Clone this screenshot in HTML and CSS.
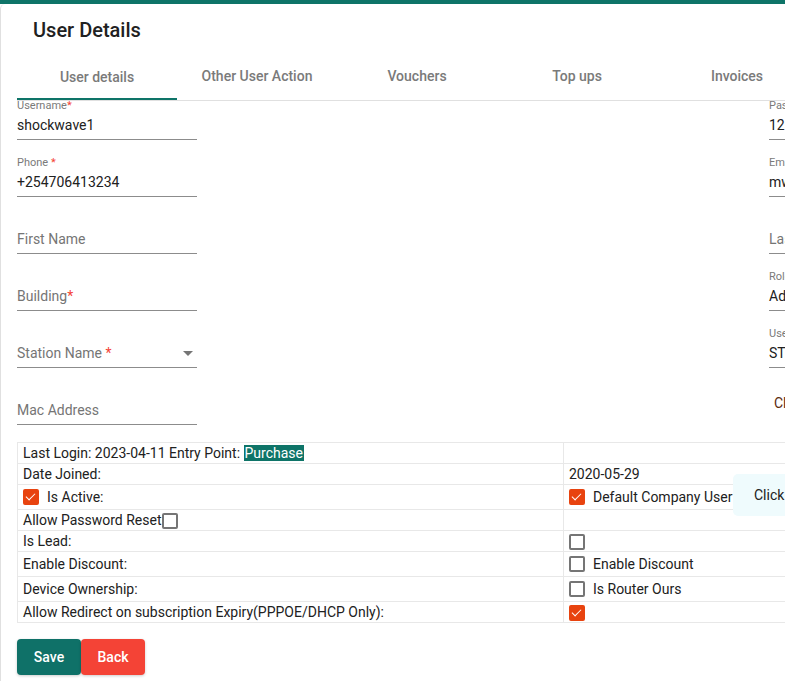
FILE: index.html
```html
<!DOCTYPE html>
<html>
<head>
<meta charset="utf-8">
<link rel="stylesheet" href="styles.css">
</head>
<body>
<div class="topbar"></div>
<div class="card">
  <h1 class="title">User Details</h1>
  <div class="tabs">
    <div class="tab active">User details</div>
    <div class="tab">Other User Action</div>
    <div class="tab">Vouchers</div>
    <div class="tab">Top ups</div>
    <div class="tab">Invoices</div>
  </div>
  <div class="form">
    <div class="col">
      <div class="field"><div class="label">Username<span class="req">*</span></div><div class="value">shockwave1</div></div>
      <div class="field"><div class="label">Phone <span class="req">*</span></div><div class="value">+254706413234</div></div>
      <div class="field"><div class="label"></div><div class="value ph">First Name</div></div>
      <div class="field"><div class="label"></div><div class="value ph">Building<span class="req">*</span></div></div>
      <div class="field"><div class="label"></div><div class="value ph select">Station Name <span class="req">*</span><span class="caret"></span></div></div>
      <div class="field"><div class="label"></div><div class="value ph">Mac Address</div></div>
    </div>
    <div class="col">
      <div class="field"><div class="label">Password</div><div class="value">12345678</div></div>
      <div class="field"><div class="label">Email</div><div class="value">mwangi@example.com</div></div>
      <div class="field"><div class="label"></div><div class="value ph">Last Name</div></div>
      <div class="field"><div class="label">Role</div><div class="value">Admin</div></div>
      <div class="field"><div class="label">User Type</div><div class="value">STANDARD</div></div>
      <div class="linkrow">Click to change password</div>
    </div>
  </div>
  <div class="tablewrap">
    <table class="info">
      <tr><td>Last Login: 2023-04-11 Entry Point: <span class="hl">Purchase</span></td><td></td></tr>
      <tr><td>Date Joined:</td><td>2020-05-29</td></tr>
      <tr><td><label class="cb"><span class="box on"></span>Is Active:</label></td><td><label class="cb"><span class="box on"></span>Default Company User</label></td></tr>
      <tr><td>Allow Password Reset<span class="box"></span></td><td></td></tr>
      <tr><td>Is Lead:</td><td><span class="box"></span></td></tr>
      <tr><td>Enable Discount:</td><td><label class="cb"><span class="box"></span>Enable Discount</label></td></tr>
      <tr><td>Device Ownership:</td><td><label class="cb"><span class="box"></span>Is Router Ours</label></td></tr>
      <tr><td>Allow Redirect on subscription Expiry(PPPOE/DHCP Only):</td><td><span class="box on"></span></td></tr>
    </table>
    <div class="hint">Click here to set default company</div>
  </div>
  <div class="actions">
    <button class="btn save">Save</button><button class="btn back">Back</button>
  </div>
</div>
</body>
</html>
```
FILE: styles.css
```css
html, body {
  margin: 0;
  padding: 0;
  overflow: hidden;
  background: #fff;
}
body {
  font-family: Roboto, "Liberation Sans", sans-serif;
  color: #212121;
  width: 1600px;
  height: 681px;
}
.topbar {
  height: 4px;
  background: #0e7468;
}
.card {
  border-left: 1px solid #e0e0e0;
  border-top-left-radius: 5px;
  padding: 0 0 20px 16px;
  height: 700px;
}
.title {
  margin: 0;
  padding: 14px 0 0 16px;
  font-size: 20px;
  font-weight: 500;
  line-height: 24px;
  height: 34px;
}
.tabs {
  display: flex;
  height: 48px;
  border-bottom: 1px solid #e0e0e0;
  width: 1500px;
}
.tab {
  width: 160px;
  text-align: center;
  font-size: 14px;
  font-weight: 500;
  color: #7a7a7a;
  line-height: 48px;
  box-sizing: border-box;
}
.tab.active {
  border-bottom: 2px solid #0e7468;
  line-height: 46px;
  padding-top: 2px;
}
.form {
  display: flex;
  margin-top: -1px;
}
.col {
  width: 752px;
}
.field {
  width: 180px;
  height: 39px;
  border-bottom: 1px solid #8c8c8c;
  margin-bottom: 17px;
}
.label {
  font-size: 11px;
  line-height: 12px;
  height: 12px;
  color: #7a7a7a;
}
.value {
  font-size: 14px;
  line-height: 26px;
  height: 26px;
  color: #212121;
  position: relative;
}
.value.ph {
  color: #757575;
}
.req {
  color: #f44336;
}
.caret {
  position: absolute;
  right: 4px;
  top: 11px;
  width: 0;
  height: 0;
  border-left: 5px solid transparent;
  border-right: 5px solid transparent;
  border-top: 5px solid #757575;
}
.linkrow {
  font-size: 14px;
  color: #5c2a0c;
  padding: 8px 0 0 5px;
  line-height: 20px;
}
.tablewrap {
  position: relative;
}
.info {
  border-collapse: collapse;
  width: 1500px;
  font-size: 14px;
}
.info td {
  border: 1px solid #e8e8e8;
  border-left: none;
  padding: 0 5px;
  line-height: 20px;
  height: 20px;
  white-space: nowrap;
  vertical-align: middle;
}
.info td:first-child {
  width: 535px;
  border-left: 1px solid #e8e8e8;
}
.hl {
  background: #0e7468;
  color: #fff;
  padding: 0 1px;
}
.cb {
  display: inline-flex;
  align-items: center;
  height: 24px;
  vertical-align: top;
}
.box {
  display: inline-block;
  width: 16px;
  height: 16px;
  box-sizing: border-box;
  border: 2px solid #757575;
  border-radius: 2px;
  vertical-align: middle;
  position: relative;
}
.cb .box {
  margin-right: 8px;
}
.box.on {
  background: #e8430f;
  border-color: #e8430f;
}
.box.on::after {
  content: "";
  position: absolute;
  left: 3px;
  top: 0px;
  width: 4px;
  height: 8px;
  border-right: 1.5px solid #fff;
  border-bottom: 1.5px solid #fff;
  transform: rotate(45deg);
}
.hint {
  position: absolute;
  left: 716px;
  top: 32px;
  height: 42px;
  padding: 0 21px;
  background: #effbfd;
  border-radius: 5px;
  font-size: 14px;
  line-height: 42px;
  white-space: nowrap;
}
.actions {
  margin-top: 16px;
  display: flex;
}
.btn {
  width: 64px;
  height: 36px;
  border: none;
  border-radius: 4px;
  color: #fff;
  font-family: Roboto, "Liberation Sans", sans-serif;
  font-size: 14px;
  font-weight: 500;
  box-shadow: 0 1px 3px rgba(0,0,0,.2);
}
.save { background: #0f7168; }
.back { background: #f44336; }
```
